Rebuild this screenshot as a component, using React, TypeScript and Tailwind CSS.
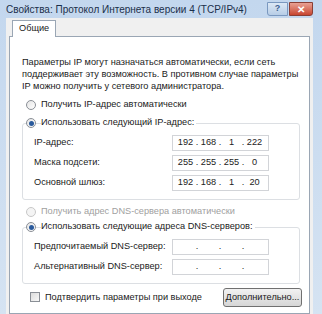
import React from "react";

const font = { fontFamily: '"Liberation Sans", Arial, sans-serif' };

const Radio = ({ checked, disabled }: { checked?: boolean; disabled?: boolean }) => (
  <span
    className={`relative inline-flex h-[10px] w-[10px] shrink-0 items-center justify-center rounded-full border ${
      disabled ? "border-[#c8c8c8] bg-[#f4f4f4]" : "border-[#8a8f96] bg-gradient-to-br from-[#e4e4e4] to-[#ffffff]"
    }`}
  >
    {checked && <span className="h-[5px] w-[5px] rounded-full bg-[#2a5a9c]" />}
  </span>
);

const IpBox = ({ parts }: { parts: string[] }) => (
  <div className="flex h-[16px] w-[97px] items-center border border-[#d2d4d8] bg-white pl-[4px] text-[9.2px] text-[#222]">
    {parts.map((p, i) => (
      <React.Fragment key={i}>
        <span className="w-[17px] text-center">{p}</span>
        {i < 3 && <span className="w-[6px] text-center">.</span>}
      </React.Fragment>
    ))}
  </div>
);

const Row = ({ label, parts }: { label: string; parts: string[] }) => (
  <div className="flex h-[20px] items-center justify-between whitespace-nowrap pl-[11px] pr-[30px]">
    <span>{label}</span>
    <IpBox parts={parts} />
  </div>
);

export default function App() {
  return (
    <div
      className="flex h-[314px] w-[322px] flex-col overflow-hidden bg-gradient-to-b from-[#c3d7ee] to-[#d5e3f2] text-[#1a1a1a]"
      style={font}
    >
      {/* title bar */}
      <div className="flex h-[18px] shrink-0 items-center justify-between pl-[6px] pr-[9px]">
        <span className="whitespace-nowrap text-[10px] text-[#1b2f4a]">
          Свойства: Протокол Интернета версии 4 (TCP/IPv4)
        </span>
        <div className="flex items-start self-start pt-[2px]">
          <div className="flex h-[14px] w-[21px] items-center justify-center rounded-bl-[3px] border border-[#7a98bf] bg-gradient-to-b from-[#dce8f5] to-[#b7cde6] text-[9px] font-bold text-[#3b5f8f]">
            ?
          </div>
          <div className="ml-px flex h-[14px] w-[24px] items-center justify-center rounded-br-[3px] border border-[#8a3f36] bg-gradient-to-b from-[#e8a093] to-[#c7442f] text-[10px] font-bold text-white">
            ✕
          </div>
        </div>
      </div>

      {/* dialog body */}
      <div className="ml-[6px] mr-[9px] flex flex-1 flex-col bg-[#f0f0f0] px-[3px] pt-[2px]">
        <div className="flex">
          <div className="relative z-10 -mb-px ml-[3px] flex h-[17px] items-center border border-b-0 border-[#9aa6b4] bg-white px-[6px] text-[9.2px]">
            Общие
          </div>
        </div>
        <div className="flex flex-1 flex-col whitespace-nowrap border border-[#9aa6b4] bg-white pl-[12px] pr-[6px] text-[9.2px]">
          <p className="mt-[19px] leading-[12px]">
            Параметры IP могут назначаться автоматически, если сеть
            <br />
            поддерживает эту возможность. В противном случае параметры
            <br />
            IP можно получить у сетевого администратора.
          </p>

          <div className="mt-[6px] flex h-[14px] items-center gap-[5px] pl-[4px]">
            <Radio />
            <span>Получить IP-адрес автоматически</span>
          </div>

          <div className="mt-[4px] flex flex-col">
            <div className="relative z-10 flex h-[14px] items-center gap-[5px] pl-[4px]">
              <Radio checked />
              <span className="bg-white pr-[2px]">Использовать следующий IP-адрес:</span>
            </div>
            <div className="-mt-[7px] mr-[3px] flex flex-col rounded-[3px] border border-[#dcdfe3] pt-[9px] pb-[6px]">
              <Row label="IP-адрес:" parts={["192", "168", "1", "222"]} />
              <Row label="Маска подсети:" parts={["255", "255", "255", "0"]} />
              <Row label="Основной шлюз:" parts={["192", "168", "1", "20"]} />
            </div>
          </div>

          <div className="mt-[5px] flex h-[14px] items-center gap-[5px] pl-[4px] text-[#a0a0a0]">
            <Radio disabled />
            <span>Получить адрес DNS-сервера автоматически</span>
          </div>

          <div className="mt-[1px] flex flex-col">
            <div className="relative z-10 flex h-[14px] items-center gap-[5px] pl-[4px]">
              <Radio checked />
              <span className="bg-white pr-[2px]">Использовать следующие адреса DNS-серверов:</span>
            </div>
            <div className="-mt-[7px] mr-[3px] flex flex-col rounded-[3px] border border-[#dcdfe3] pt-[9px] pb-[6px]">
              <Row label="Предпочитаемый DNS-сервер:" parts={["", "", "", ""]} />
              <Row label="Альтернативный DNS-сервер:" parts={["", "", "", ""]} />
            </div>
          </div>

          <div className="mt-[4px] flex items-center justify-between pl-[8px] pr-[1px]">
            <div className="flex items-center gap-[5px]">
              <span className="h-[10px] w-[10px] border border-[#8a8f96] bg-gradient-to-br from-[#dcdcdc] to-[#f8f8f8]" />
              <span>Подтвердить параметры при выходе</span>
            </div>
            <div className="flex h-[19px] w-[79px] items-center justify-center rounded-[3px] border border-[#707070] bg-gradient-to-b from-[#f2f2f2] to-[#d6d6d6] text-[9.2px]">
              Дополнительно...
            </div>
          </div>
        </div>
      </div>
    </div>
  );
}
